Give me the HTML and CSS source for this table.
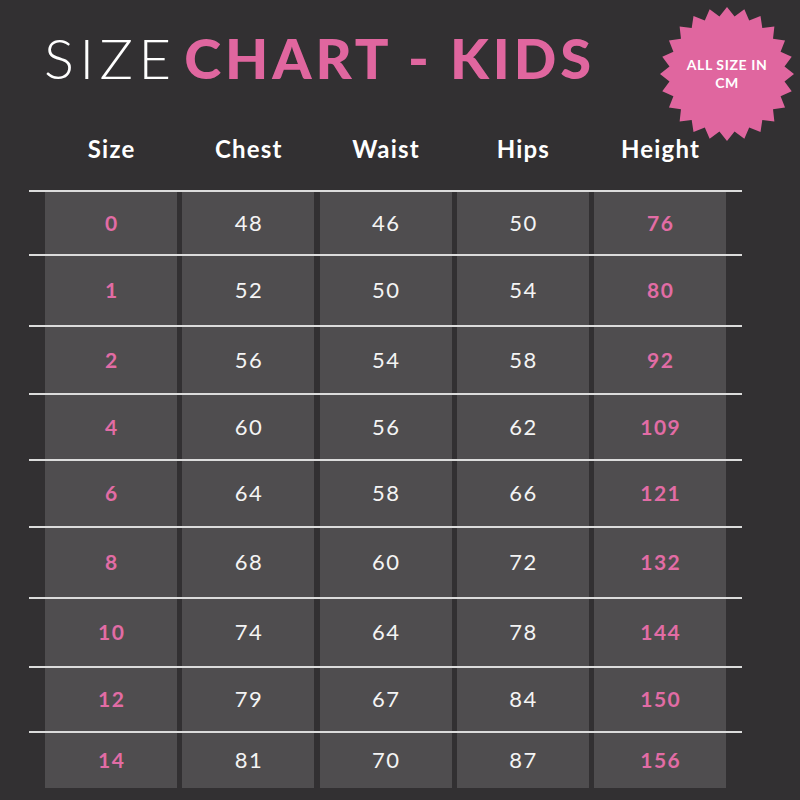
FILE: index.html
```html
<!DOCTYPE html>
<html lang="en">
<head>
<meta charset="utf-8">
<title>Size Chart - Kids</title>
<link rel="stylesheet" href="styles.css">
</head>
<body>
<main class="page">
  <header class="top">
    <h1 class="title"><span class="thin">SIZE </span><span class="strong">CHART - KIDS</span></h1>
    <div class="badge">
      <svg class="badge-star" viewBox="0 0 134 134" width="134" height="134" aria-hidden="true">
        <polygon fill="#e0669f" points="67,0 74.57,9.5 84.34,2.28 89.2,13.41 100.5,8.98 102.31,20.99 114.38,19.62 113.01,31.69 125.02,33.5 120.59,44.8 131.72,49.66 124.5,59.43 134,67 124.5,74.57 131.72,84.34 120.59,89.2 125.02,100.5 113.01,102.31 114.38,114.38 102.31,113.01 100.5,125.02 89.2,120.59 84.34,131.72 74.57,124.5 67,134 59.43,124.5 49.66,131.72 44.8,120.59 33.5,125.02 31.69,113.01 19.62,114.38 20.99,102.31 8.98,100.5 13.41,89.2 2.28,84.34 9.5,74.57 0,67 9.5,59.43 2.28,49.66 13.41,44.8 8.98,33.5 20.99,31.69 19.62,19.62 31.69,20.99 33.5,8.98 44.8,13.41 49.66,2.28 59.43,9.5"/>
      </svg>
      <span class="badge-text">ALL SIZE IN<br>CM</span>
    </div>
  </header>

  <div class="heads">
    <div class="head">Size</div>
    <div class="head">Chest</div>
    <div class="head">Waist</div>
    <div class="head">Hips</div>
    <div class="head">Height</div>
  </div>

  <div class="table">
    <div class="row"><div class="cell key">0</div><div class="cell">48</div><div class="cell">46</div><div class="cell">50</div><div class="cell key">76</div></div>
    <div class="row"><div class="cell key">1</div><div class="cell">52</div><div class="cell">50</div><div class="cell">54</div><div class="cell key">80</div></div>
    <div class="row"><div class="cell key">2</div><div class="cell">56</div><div class="cell">54</div><div class="cell">58</div><div class="cell key">92</div></div>
    <div class="row"><div class="cell key">4</div><div class="cell">60</div><div class="cell">56</div><div class="cell">62</div><div class="cell key">109</div></div>
    <div class="row"><div class="cell key">6</div><div class="cell">64</div><div class="cell">58</div><div class="cell">66</div><div class="cell key">121</div></div>
    <div class="row"><div class="cell key">8</div><div class="cell">68</div><div class="cell">60</div><div class="cell">72</div><div class="cell key">132</div></div>
    <div class="row"><div class="cell key">10</div><div class="cell">74</div><div class="cell">64</div><div class="cell">78</div><div class="cell key">144</div></div>
    <div class="row"><div class="cell key">12</div><div class="cell">79</div><div class="cell">67</div><div class="cell">84</div><div class="cell key">150</div></div>
    <div class="row"><div class="cell key">14</div><div class="cell">81</div><div class="cell">70</div><div class="cell">87</div><div class="cell key">156</div></div>
  </div>
</main>
</body>
</html>
```

FILE: styles.css
```css
* { box-sizing: border-box; }

html, body {
  margin: 0;
  padding: 0;
  background: #323032;
}

body {
  width: 800px;
  height: 800px;
  overflow: hidden;
  font-family: "Lato", "Open Sans", "Liberation Sans", sans-serif;
  color: #ffffff;
}

.page {
  width: 800px;
  height: 800px;
}

.top {
  position: relative;
  height: 128px;
  padding: 24px 0 0 44px;
}

.title {
  margin: 0;
  font-size: 56px;
  line-height: 1.2;
  font-weight: 400;
  white-space: nowrap;
}

.thin {
  font-weight: 300;
  color: #ffffff;
  letter-spacing: 5.5px;
  word-spacing: -13px;
}

.strong {
  font-weight: 900;
  color: #e0669f;
  letter-spacing: 3.9px;
}

.badge {
  position: absolute;
  left: 660px;
  top: 7px;
  width: 134px;
  height: 134px;
  display: flex;
  align-items: center;
  justify-content: center;
}

.badge-star {
  position: absolute;
  left: 0;
  top: 0;
}

.badge-text {
  position: relative;
  font-size: 14px;
  font-weight: 700;
  line-height: 18px;
  letter-spacing: 0.6px;
  text-align: center;
  color: #ffffff;
}

.heads {
  display: grid;
  grid-template-columns: repeat(5, 132px);
  column-gap: 5.25px;
  height: 42px;
  margin: 0 0 20px 45px;
  align-items: center;
}

.head {
  text-align: center;
  font-size: 24px;
  font-weight: 700;
  line-height: 42px;
  letter-spacing: 1.2px;
  text-indent: 1.2px;
}

.table {
  width: 713px;
  margin-left: 29px;
}

.row {
  display: grid;
  grid-template-columns: repeat(5, 132px);
  column-gap: 5.25px;
  padding: 0 16px;
  border-top: 2px solid #dcdcdc;
  height: 67px;
}

.row:nth-child(1) { height: 64px; }
.row:nth-child(2) { height: 71px; }
.row:nth-child(3) { height: 68px; }
.row:nth-child(4) { height: 66px; }
.row:nth-child(5) { height: 67px; }
.row:nth-child(6) { height: 71px; }
.row:nth-child(7) { height: 69px; }
.row:nth-child(8) { height: 65px; }
.row:nth-child(9) { height: 57px; }

.cell {
  background: #4f4d4f;
  display: flex;
  align-items: center;
  justify-content: center;
  font-size: 22px;
  font-weight: 400;
  color: #f4f4f4;
  letter-spacing: 1.5px;
  padding-left: 1.5px;
  padding-bottom: 2px;
}

.cell.key {
  font-weight: 700;
  color: #e26ca5;
  font-size: 21px;
  letter-spacing: 1.5px;
  padding-left: 1.5px;
}
```
